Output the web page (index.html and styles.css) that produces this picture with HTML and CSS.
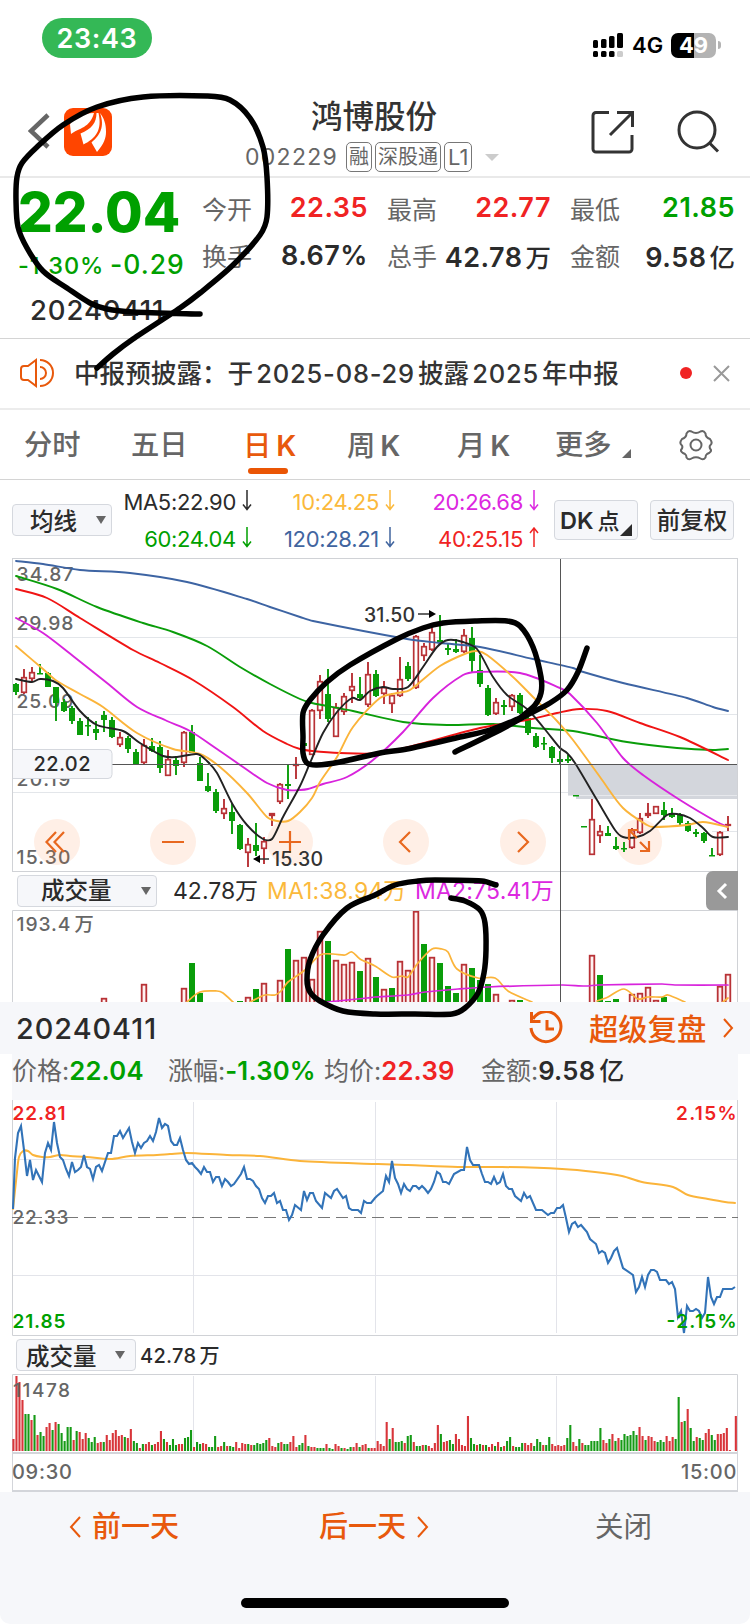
FILE: index.html
```html
<!DOCTYPE html>
<html lang="zh-cn">

<head>
    <meta charset="UTF-8">
    <meta name="viewport" content="width=device-width, initial-scale=1.0">
    <title>鸿博股份</title>
    <link rel="stylesheet" href="styles.css">
</head>

<body>
    <div class="status">
        <div class="time">23:43</div>
        <div class="status-right">
            <svg class="signal" width="30" height="25">
                <rect x="0" y="7" width="5" height="8" rx="1.5" />
                <rect x="8" y="6" width="5.5" height="9" rx="1.5" />
                <rect x="16" y="3" width="5.5" height="12" rx="1.5" />
                <rect x="24" y="0" width="6" height="15" rx="1.5" />
                <rect x="0" y="18" width="5" height="6" rx="1.5" />
                <rect x="8" y="18" width="5.5" height="6" rx="1.5" />
                <rect x="16" y="18" width="5.5" height="6" rx="1.5" />
                <rect x="24" y="18" width="6" height="6" rx="1.5" fill="#ccc" />
            </svg>
            <span class="net">4G</span>
            <div class="battery">49</div>
            <i class="nub"></i>
        </div>
    </div>

    <div class="header">
        <svg class="back" width="22" height="36" viewBox="0 0 22 36">
            <path d="M20 2L3 18l17 16" />
        </svg>
        <svg class="logo" width="48" height="48" viewBox="0 0 48 48">
            <rect width="48" height="48" rx="9" fill="#ff4500" />
            <path d="M30 5C19 5 8 9 6 16.500L7 26c8-6 19-6 23-21zM32.500 5c0 10-5 16-16 20.500l3 11c12-6 19-14 15-31.500zM36 5c5 14 0 22-8.500 29.500l5.500 9.500c7-8 9-14 9-20 0-8-2-14-6-19z" />
        </svg>
        <div class="title">
            <h1>鸿博股份</h1>
            <div class="code">
                <span class="num">002229</span>
                <span class="tag">融</span>
                <span class="tag">深股通</span>
                <span class="tag">L1</span>
                <i class="down"></i>
            </div>
        </div>
        <svg class="share" width="44" height="44" viewBox="0 0 44 44">
            <path d="M18 2.500H5a3 3 0 0 0-3 3V39a3 3 0 0 0 3 3h33a3 3 0 0 0 3-3V25M26 2.500h15.500V17M41 3L19 25" />
        </svg>
        <svg class="search" width="44" height="44" viewBox="0 0 44 44">
            <circle cx="20" cy="20" r="18" />
            <path d="M32.500 33L41 41.500" />
        </svg>
    </div>

    <div class="quote">
        <div class="now">
            <div class="price">22.04</div>
            <div class="change"><span>-1.30%</span><b>-0.29</b></div>
            <div class="date">20240411</div>
        </div>
        <div class="grid">
            <div class="cell"><span>今开</span><b class="up">22.35</b></div>
            <div class="cell"><span>最高</span><b class="up">22.77</b></div>
            <div class="cell"><span>最低</span><b class="fall">21.85</b></div>
            <div class="cell"><span>换手</span><b>8.67%</b></div>
            <div class="cell"><span>总手</span><b>42.78<em>万</em></b></div>
            <div class="cell"><span>金额</span><b>9.58<em>亿</em></b></div>
        </div>
    </div>

    <div class="notice">
        <svg class="horn" width="36" height="30" viewBox="0 0 36 30">
            <path d="M16 2v26L8 22H4a3 3 0 0 1-3-3v-8a3 3 0 0 1 3-3h4zM20 9a6 6 0 0 1 0 12M20 2a13 13 0 0 1 0 26" />
        </svg>
        <p>中报预披露：<span>于</span><span class="n">2025-08-29</span><span>披露</span><span class="n">2025</span><span>年中报</span></p>
        <i class="dot"></i>
        <svg class="close" width="17" height="17" viewBox="0 0 17 17">
            <path d="M1 1l15 15M16 1L1 16" />
        </svg>
    </div>

    <div class="tabs">
        <span>分时</span>
        <span>五日</span>
        <span class="active">日<em>K</em></span>
        <span>周<em>K</em></span>
        <span>月<em>K</em></span>
        <span class="more">更多<i></i></span>
        <svg class="gear" width="34" height="32" viewBox="-17 -16 34 32">
            <path d="M-4.500-13.500Q0-10.500 4.500-13.500Q7.500-15 9.500-11.500Q9.500-7.500 14-6Q17-2 14.500 0Q12.500 2 15 5Q15.500 7 11 9Q9.500 10 9.500 12.500Q7.500 15.500 4.500 13.500Q0 11 -4.500 13.500Q-7.500 15.500-9.500 12.500Q-9.500 10-11 9Q-15.500 7-15 5Q-12.500 2-14.500 0Q-17-2-14-6Q-9.500-7.500-9.500-11.500Q-7.500-15-4.500-13.500z" />
            <circle r="5.500" />
        </svg>
    </div>

    <div class="ma">
        <div class="select s1">均线<i></i></div>
        <div class="ma-list">
            <span class="c1">MA5:22.90<svg class="arr" viewBox="0 0 10 21"><path d="M5 0v19M1 14.500l4 5 4-5" /></svg></span>
            <span class="c2">10:24.25<svg class="arr" viewBox="0 0 10 21"><path d="M5 0v19M1 14.500l4 5 4-5" /></svg></span>
            <span class="c3">20:26.68<svg class="arr" viewBox="0 0 10 21"><path d="M5 0v19M1 14.500l4 5 4-5" /></svg></span>
            <span class="c4">60:24.04<svg class="arr" viewBox="0 0 10 21"><path d="M5 0v19M1 14.500l4 5 4-5" /></svg></span>
            <span class="c5">120:28.21<svg class="arr" viewBox="0 0 10 21"><path d="M5 0v19M1 14.500l4 5 4-5" /></svg></span>
            <span class="c6">40:25.15<svg class="arr" viewBox="0 0 10 21"><path d="M5 20V1M1 6l4-5 4 5" /></svg></span>
        </div>
        <div class="btn dk">DK<em>点</em><i></i></div>
        <div class="btn">前复权</div>
    </div>

    <div class="kline">
        <svg id="candle" width="726" height="314" viewBox="0 0 726 314">
            <g stroke="#e3e6ea" stroke-width="1">
                <path d="M0 79.500h726M0 156.500h726M0 234.500h726M700 273.500h26" />
            </g>
            <path d="M556 206h170v35H564v-4h-8z" fill="#d3d6dc" />
            <path d="M556 237.500h170" stroke="#e6e8ec" />
            <g class="axis">
                <text x="4.500" y="23" textLength="57">34.87</text>
                <text x="4.500" y="72" textLength="57">29.98</text>
                <text x="4.500" y="150" textLength="57">25.09</text>
                <text x="4.500" y="228" textLength="54">20.19</text>
                <text x="4.500" y="306" textLength="54">15.30</text>
            </g>
            <g fill="#ff7a30" fill-opacity=".12">
                <circle cx="45" cy="284" r="23" />
                <circle cx="161" cy="284" r="23" />
                <circle cx="278" cy="284" r="23" />
                <circle cx="394" cy="284" r="23" />
                <circle cx="511" cy="284" r="23" />
                <circle cx="627" cy="284" r="23" />
            </g>
            <g id="sticks"></g>
            <g id="maLines"></g>
            <g fill="none" stroke="#e8681f" stroke-width="2.200">
                <path d="M44 274L34.500 284L44 294M52 274L42.500 284L52 294" />
                <path d="M150 284h22M267 284h22M278 273v22" />
                <path d="M398 274L388 284L398 294M506 274L516 284L506 294" />
                <path d="M617 282v-10h9M617 272l8 8M637 283v10h-9M637 293l-9-9" />
            </g>
            <g class="mark">
                <text x="352" y="64" textLength="51">31.50</text>
                <text x="260" y="308" textLength="51">15.30</text>
                <path d="M406 56h15M257 301h-13" stroke="#333" stroke-width="1.500" />
                <path d="M424 56l-7-4v8zM241 301l7-4v8z" />
            </g>
            <path d="M100 206.500h626" stroke="#555" />
            <g class="tip">
                <rect x="-3" y="191.500" width="103" height="29" rx="4" />
                <text x="21.500" y="213" textLength="57">22.02</text>
            </g>
            <path d="M.5 0v314M725.500 0v314M0 .5h726M0 313.500h726" stroke="#d0d2d6" />
        </svg>
        <div class="vol-head">
            <div class="select s2">成交量<i></i></div>
            <span class="v1">42.78万</span>
            <span class="v2">MA1:38.94万</span>
            <span class="v3">MA2:75.41万</span>
            <div class="fold"><svg width="12" height="18" viewBox="0 0 12 18"><path d="M10 2L3 9l7 7" /></svg></div>
        </div>
        <svg id="volume" width="726" height="92" viewBox="0 0 726 92">
            <g class="axis">
                <text x="4.500" y="21" textLength="54">193.4</text>
                <text x="62.500" y="21" textLength="18">万</text>
            </g>
            <g id="volBars"></g>
            <g id="volLines"></g>
            <path d="M.5 92V.5h725V92" fill="none" stroke="#d0d2d6" />
        </svg>
        <div class="cross"></div>
    </div>

    <div class="day-head">
        <span class="day">20240411</span>
        <svg class="history" width="34" height="34" viewBox="0 0 34 34">
            <path d="M4 8a15 15 0 1 1-2 9M2.500 1v9.500h9M18 9v9h7" />
        </svg>
        <span class="replay">超级复盘</span>
        <svg class="chev" width="12" height="20" viewBox="0 0 12 20"><path d="M2 1l8 9-8 9" /></svg>
    </div>
    <div class="day-info">
        <span>价格:<b class="fall">22.04</b></span>
        <span>涨幅:<b class="fall">-1.30%</b></span>
        <span>均价:<b class="up">22.39</b></span>
        <span>金额:<b>9.58<em>亿</em></b></span>
    </div>

    <svg id="minute" width="726" height="236" viewBox="0 0 726 236">
        <path d="M0 59.500h726M0 175.500h726M181.500 2v231M363.500 2v231M544.500 2v231" stroke="#e3e4ea" />
        <path d="M.5 0v235.500h725V0" fill="none" stroke="#d0d2d6" />
        <path d="M0 117.500h726" stroke="#777" stroke-dasharray="12 6" />
        <g class="small">
            <text x=".5" y="124" textLength="56" fill="#666">22.33</text>
        </g>
        <g id="minuteLines"></g>
        <g class="small">
            <text x=".5" y="20" textLength="53" fill="#f02323">22.81</text>
            <text x=".5" y="228" textLength="53" fill="#00a000">21.85</text>
            <text x="664" y="20" textLength="60.500" fill="#f02323">2.15%</text>
            <text x="654.500" y="228" textLength="70" fill="#00a000">-2.15%</text>
        </g>
    </svg>

    <div class="vol-head2">
        <div class="select s3">成交量<i></i></div>
        <span>42.78<em>万</em></span>
    </div>

    <svg id="minuteVol" width="726" height="78" viewBox="0 0 726 78">
        <path d="M181.500 2v75M363.500 2v75M544.500 2v75" stroke="#e3e4ea" />
        <path d="M.5 78V.5h725V78" fill="none" stroke="#d0d2d6" />
        <g id="minuteBars"></g>
        <g class="small"><text x="1" y="23" textLength="57" fill="#666">11478</text></g>
    </svg>
    <div class="hours"><span>09:30</span><span>15:00</span></div>

    <div class="footer">
        <div class="days">
            <a><svg width="12" height="22" viewBox="0 0 12 22"><path d="M11 1L2 11l9 10" /></svg>前一天</a>
            <a>后一天<svg width="12" height="22" viewBox="0 0 12 22"><path d="M1 1l9 10-9 10" /></svg></a>
            <a class="quit">关闭</a>
        </div>
        <div class="home"></div>
    </div>

    <svg id="pen" width="750" height="1624" viewBox="0 0 750 1624"></svg>

    <script src="chart.js"></script>
</body>

</html>
```
FILE: styles.css
```css
* {
    box-sizing: border-box;
}

body {
    position: relative;
    width: 750px;
    height: 1624px;
    margin: 0;
    overflow: hidden;
    background: #fff;
    color: #2b2b2b;
    font-family: Inter, "Noto Sans CJK SC", sans-serif;
}

svg {
    display: block;
    flex: none;
}

em,
i {
    font-style: normal;
}

h1,
p {
    margin: 0;
}

.up {
    color: #f02323 !important;
}

.fall {
    color: #00a000 !important;
}

/* 状态栏 */
.status {
    display: flex;
    justify-content: space-between;
    height: 90px;
    padding: 18px 29px 0 42px;
}

.time {
    width: 110px;
    height: 40px;
    line-height: 41px;
    border-radius: 20px;
    background: #34b856;
    color: #fff;
    font-size: 27px;
    font-weight: 600;
    text-align: center;
    letter-spacing: .6px;
}

.status-right {
    display: flex;
    align-items: center;
    height: 54px;
}

.net {
    margin: 0 0 0 9px;
    width: 39px;
    color: #000;
    font-size: 22px;
    font-weight: 600;
}

.battery {
    width: 45px;
    height: 25px;
    line-height: 25px;
    border-radius: 7px;
    background: linear-gradient(to right, #000 50%, #b3b3b3 50%);
    color: #fff;
    font-size: 22px;
    font-weight: 700;
    text-align: center;
}

.nub {
    width: 3px;
    height: 8px;
    margin-left: 2px;
    border-radius: 0 3px 3px 0;
    background: #b3b3b3;
}

/* 头部 */
.header {
    display: flex;
    align-items: flex-start;
    height: 88px;
    border-bottom: 2px solid #e9e9e9;
}

.header path,
.header circle {
    fill: none;
    stroke: #333;
    stroke-width: 3;
}

.header .back {
    margin: 23px 0 0 28px;
}

.header .back path {
    stroke: #666;
    stroke-width: 4.5;
}

.header .logo {
    margin: 18px 0 0 14px;
}

.header .logo path {
    fill: #fff;
    stroke: none;
}

.title {
    width: 273px;
    margin-left: 133px;
}

.title h1 {
    width: 258px;
    margin-top: 7px;
    line-height: 40px;
    font-size: 31.5px;
    font-weight: 500;
    text-align: center;
    color: #333;
}

.code {
    display: flex;
    align-items: center;
    height: 30px;
    margin-top: 5px;
    color: #666;
}

.code .num {
    width: 101px;
    font-size: 23px;
    letter-spacing: 1.3px;
}

.tag {
    height: 30px;
    line-height: 28px;
    padding: 0 2px;
    margin-right: 3px;
    border: 1px solid #777;
    border-radius: 5px;
    font-size: 20px;
    white-space: nowrap;
}

.tag:nth-child(4) {
    padding: 0 3px;
    font-size: 22px;
}

.down {
    margin-left: 10px;
    border: 7px solid transparent;
    border-top-color: #ccc;
    border-bottom: 0;
}

.share {
    margin: 20px 0 0 73px;
}

.search {
    margin: 20px 0 0 42px;
}

/* 行情 */
.quote {
    display: flex;
    height: 161px;
    border-bottom: 1px solid #d4d4d4;
}

.now {
    width: 202px;
    padding-left: 18px;
    color: #00a000;
}

.price {
    height: 66px;
    line-height: 68px;
    font-size: 54.5px;
    font-weight: 800;
}

.change {
    display: flex;
    align-items: baseline;
    height: 40px;
    line-height: 40px;
    white-space: nowrap;
}

.change span {
    width: 92px;
    font-size: 23.5px;
    font-weight: 500;
    letter-spacing: 1px;
}

.change b {
    font-size: 26.5px;
    font-weight: 500;
    letter-spacing: 1px;
}

.date {
    padding: 6px 0 0 12px;
    line-height: 40px;
    font-size: 27.5px;
    font-weight: 500;
    letter-spacing: .9px;
    color: #2b2b2b;
}

.grid {
    display: grid;
    grid-template-columns: 166px 164px 165px;
    grid-template-rows: 47px 48px;
    column-gap: 19px;
    padding-top: 6px;
}

.cell {
    display: flex;
    justify-content: space-between;
    align-items: center;
    white-space: nowrap;
}

.cell span {
    font-size: 25px;
    color: #666;
}

.cell b {
    font-size: 27px;
    font-weight: 600;
    letter-spacing: .5px;
}

.cell em {
    margin-left: 3px;
    font-size: 25.5px;
    font-weight: 500;
    letter-spacing: 0;
}

/* 公告 */
.notice {
    display: flex;
    align-items: center;
    height: 71px;
    padding: 0 20px 3px 20px;
    border-bottom: 2px solid #ececec;
}

.horn {
    margin-top: 2px;
}

.horn path {
    fill: none;
    stroke: #e8590c;
    stroke-width: 2;
}

.notice p {
    width: 624px;
    padding-left: 18px;
    margin-top: -1px;
    white-space: nowrap;
    font-size: 25.6px;
    font-weight: 500;
    color: #333;
}

.notice p span {
    margin-right: 3px;
}

.notice .n {
    font-size: 25.5px;
    letter-spacing: .8px;
}

.dot {
    width: 12px;
    height: 12px;
    margin-top: 2px;
    border-radius: 50%;
    background: #f02323;
}

.close {
    margin-top: 2px;
    margin-left: 21px;
}

.close path {
    stroke: #999;
    stroke-width: 2;
}

/* 周期 */
.tabs {
    display: grid;
    grid-template-columns: 107px 112px 104px 110px 98px 124px 34px;
    align-items: center;
    height: 70px;
    padding-left: 24px;
    border-bottom: 1px solid #d4d4d4;
}

.tabs span {
    position: relative;
    height: 69px;
    line-height: 71px;
    font-size: 28.3px;
    font-weight: 500;
    color: #666;
    white-space: nowrap;
}

.tabs em {
    margin-left: 5px;
    font-size: 28.5px;
    font-weight: 600;
}

.tabs .active {
    color: #e8590c;
}

.tabs .active::after {
    content: "";
    position: absolute;
    left: 5px;
    bottom: 5px;
    width: 40px;
    height: 6px;
    border-radius: 3px;
    background: #ea5504;
}

.more i {
    display: inline-block;
    margin-left: 10px;
    border-left: 9px solid transparent;
    border-bottom: 9px solid #666;
    vertical-align: -3px;
}

.gear path,
.gear circle {
    fill: none;
    stroke: #666;
    stroke-width: 2;
}

/* 均线 */
.ma {
    display: flex;
    align-items: center;
    height: 78px;
    padding: 2px 0 0 12px;
}

.select {
    display: flex;
    align-items: center;
    flex: none;
    height: 32px;
    border: 1px solid #d5d8de;
    border-radius: 4px;
    background: #f6f7fa;
    font-size: 23.5px;
    font-weight: 500;
}

.select i {
    border: 5px solid transparent;
    border-top: 8px solid #666;
    border-bottom: 0;
}

.s1 {
    width: 100px;
    padding-left: 17px;
}

.s1 i {
    margin-left: 19px;
}

.ma-list {
    display: grid;
    grid-template-columns: 140px 143px 144px;
    grid-template-rows: 37px 37px;
    width: 442px;
}

.ma-list span {
    display: flex;
    justify-content: flex-end;
    align-items: center;
    font-size: 22px;
    letter-spacing: -.3px;
}

.arr {
    width: 10px;
    height: 21px;
    margin-left: 6px;
    margin-top: -2px;
}

.arr path {
    fill: none;
    stroke: currentColor;
    stroke-width: 1.5;
}

.c1 {
    color: #2b2b2b;
}

.c2 {
    color: #fbb93c;
}

.c3 {
    color: #dc28e0;
}

.c4 {
    color: #00a000;
}

.c5 {
    color: #41659f;
}

.c6 {
    color: #f02323;
}

.btn {
    position: relative;
    flex: none;
    width: 84px;
    height: 40px;
    line-height: 39px;
    margin-right: 12px;
    border: 1px solid #d5d8de;
    border-radius: 4px;
    background: #f6f7fa;
    font-size: 23.5px;
    font-weight: 500;
    text-align: center;
    white-space: nowrap;
}

.dk {
    padding-left: 5px;
    text-align: left;
    font-weight: 600;
}

.dk em {
    margin-left: 4px;
    font-size: 22px;
    font-weight: 500;
}

.dk i {
    position: absolute;
    right: 5px;
    bottom: 3px;
    border-left: 12px solid transparent;
    border-bottom: 12px solid #2b2b2b;
}

/* K线 */
.kline {
    position: relative;
    width: 726px;
    margin-left: 12px;
}

text {
    font-family: Inter, "Noto Sans CJK SC", sans-serif;
}

.axis text {
    font-size: 19.3px;
    font-weight: 500;
    fill: #666;
}

.mark text {
    font-size: 19.5px;
    font-weight: 500;
    fill: #333;
}

.tip rect {
    fill: #f6f7fa;
    stroke: #d5d8de;
}

.tip text {
    font-size: 20px;
    font-weight: 500;
    fill: #2b2b2b;
}

.vol-head {
    display: flex;
    align-items: center;
    height: 38px;
    padding: 0 0 1px 5px;
    font-size: 23px;
    line-height: 32px;
    white-space: nowrap;
}

.s2 {
    width: 140px;
    padding-left: 23px;
}

.s2 i {
    margin-left: 29px;
}

.v1 {
    width: 94px;
    margin-left: 16px;
}

.v2 {
    width: 148px;
    color: #fbb93c;
    letter-spacing: .1px;
}

.v3 {
    color: #dc28e0;
    letter-spacing: .2px;
}

.fold {
    width: 32px;
    height: 40px;
    margin-left: auto;
    margin-top: 1px;
    padding: 11px 0 0 10px;
    border-radius: 7px 0 0 7px;
    background: #999;
}

.fold path {
    fill: none;
    stroke: #fff;
    stroke-width: 3;
}

.cross {
    position: absolute;
    left: 548px;
    top: 1px;
    width: 1px;
    height: 443px;
    background: #555;
}

/* 当日分时 */
.day-head {
    display: flex;
    align-items: center;
    height: 52px;
    padding-left: 16px;
    background: #f6f7fa;
}

.day {
    width: 513px;
    font-size: 28.8px;
    font-weight: 500;
    letter-spacing: 1px;
}

.history path {
    fill: none;
    stroke: #e8590c;
    stroke-width: 3;
}

.replay {
    width: 133px;
    margin-left: 26px;
    padding-bottom: 2px;
    font-size: 29.3px;
    font-weight: 500;
    color: #e8590c;
}

.chev path,
.footer path {
    fill: none;
    stroke: #e8590c;
    stroke-width: 2;
}

.day-info {
    display: grid;
    grid-template-columns: 156px 156px 157px 160px;
    width: 726px;
    height: 46px;
    line-height: 34px;
    margin-left: 12px;
    background: #f6f7fa;
    font-size: 25px;
    color: #666;
    white-space: nowrap;
}

.day-info b {
    font-size: 25.7px;
    font-weight: 600;
    color: #2b2b2b;
    letter-spacing: .2px;
}

.day-info em {
    margin-left: 4px;
    font-size: 25px;
    font-weight: 500;
}

#minute,
#minuteVol {
    margin-left: 12px;
}

.small text {
    font-size: 19px;
    font-weight: 600;
}

.small text[fill="#666"] {
    font-weight: 500;
}

.vol-head2 {
    display: flex;
    align-items: center;
    height: 38px;
    padding: 0 0 1px 16px;
    font-size: 20px;
    font-weight: 500;
    letter-spacing: .3px;
}

.vol-head2 em {
    margin-left: 3px;
}

.s3 {
    width: 120px;
    margin-right: 4px;
    padding-left: 9px;
    letter-spacing: 0;
}

.s3 i {
    margin-left: 18px;
}

.hours {
    display: flex;
    justify-content: space-between;
    align-items: center;
    width: 726px;
    height: 40px;
    margin-left: 12px;
    border: 2px solid #d3d5da;
    border-width: 2px 1px;
    font-size: 20px;
    font-weight: 500;
    letter-spacing: .7px;
    color: #666;
}

.hours span:first-child {
    margin-left: -1px;
}

.footer {
    height: 132px;
    border-radius: 0 0 10px 10px;
    background: #f6f7fa;
}

.days {
    display: grid;
    grid-template-columns: 250px 276px 154px;
    align-items: center;
    height: 106px;
    padding: 0 0 37px 69px;
    line-height: 40px;
    font-size: 29px;
    font-weight: 500;
    color: #e8590c;
}

.days a {
    display: flex;
    align-items: center;
    gap: 11px;
}

.days .quit {
    color: #666;
    font-size: 28.5px;
    font-weight: 400;
}

.home {
    width: 268px;
    height: 10px;
    margin-left: 241px;
    border-radius: 5px;
    background: #000;
}

/* 手写标注 */
#pen {
    position: absolute;
    left: 0;
    top: 0;
    pointer-events: none;
}
```
FILE: chart.js
```js
var RED = "#b83236";
var GREEN = "#0a9d0a";

// 颜色 最高 实体上 实体下 最低
var candles = [
    "G 125 126 134 137", "R 111 119 135 136", "R 109 114 121 124", "G 106 115 116 116", "G 114 115 129 129",
    "G 129 129 145 163", "G 141 144 153 154", "G 148 150 163 166", "G 160 163 177 177", "G 159 167 168 178",
    "G 163 171 175 182", "G 153 157 162 174", "G 159 162 179 180", "R 174 179 187 189", "G 178 180 191 195",
    "G 191 194 207 207", "R 181 187 205 206", "G 180 188 193 194", "G 183 189 210 215", "R 192 201 218 218",
    "G 198 202 208 217", "R 173 174 205 209", "G 167 174 195 195", "G 199 205 223 223", "G 215 228 233 234",
    "G 231 234 253 255", "R 241 250 256 261", "G 245 254 263 276", "G 266 267 291 292", "R 280 286 295 309",
    "G 265 287 293 298", "R 279 283 291 306", "R 255 255 258 268", "R 225 226 244 246", "G 207 226 228 241",
    "R 199 206 208 221", "G 184 185 188 188", "R 151 152 197 197", "R 117 123 153 161", "G 111 136 161 164",
    "R 145 149 179 179", "R 135 138 154 157", "R 115 128 133 145", "G 119 136 140 142", "R 104 116 147 149",
    "G 112 116 138 139", "R 123 129 136 146", "R 135 137 146 155", "R 99 121 138 139", "G 104 108 121 123",
    "R 77 78 130 131", "R 85 88 98 103", "R 70 74 92 93", "G 57 82 84 85", "G 85 90 92 97",
    "G 81 91 94 95", "R 71 77 94 95", "G 69 80 103 115", "G 97 112 126 129", "G 127 130 157 158",
    "R 140 144 156 157", "G 142 147 149 157", "R 136 137 149 153", "G 135 137 155 156", "G 159 160 175 177",
    "G 175 178 189 190", "G 179 185 186 192", "G 188 189 200 205", "G 193 201 204 207", "G 197 201 203 205",
    "G 237 237 238 238", "G 268 268 269 269", "R 241 261 297 297", "R 267 273 278 285", "G 268 275 278 278",
    "G 279 288 291 292", "G 284 290 291 294", "R 270 272 290 291", "R 255 260 275 276", "R 245 255 258 260",
    "R 248 248 256 256", "G 244 252 257 262", "G 250 255 259 260", "G 255 257 265 267", "G 263 265 273 274",
    "G 271 274 276 279", "G 274 275 283 285", "G 290 297 298 298", "R 273 274 297 298", "R 258 266 268 273"
];

var ma = [
    ["#3d64a3", "4,3 31,6 68,12 118,15 175,24 235,41 258,49 288,59 301,63 395,81 428,85 468,89 521,101 561,110 568,113 611,125 675,140 701,149 716,153"],
    ["#0a9d0a", "4,18 45,31 85,49 131,65 161,74 195,88 228,109 258,126 288,141 300,145 341,153 391,164 435,167 481,166 521,170 561,173 615,184 665,190 701,192 716,191"],
    ["#f01414", "4,31 35,40 68,60 121,92 148,105 181,122 221,149 251,173 275,186 288,191 300,193 328,195 368,195 408,186 468,170 515,162 545,155 568,151 595,153 628,165 668,179 716,202"],
    ["#d823dc", "4,60 31,75 61,98 95,125 125,149 155,163 178,173 205,191 231,209 255,225 275,232 288,232 296,231 311,226 335,219 361,202 391,174 421,140 451,117 465,114 508,115 548,130 558,136 585,165 611,200 631,217 668,242 705,264 716,269"],
    ["#fbb43a", "4,88 31,111 45,123 68,136 91,149 125,175 161,191 188,196 208,209 235,235 255,259 265,263 276,263 288,254 300,240 308,224 325,199 341,169 368,140 385,135 398,132 428,108 455,95 465,93 475,97 501,119 521,139 545,163 561,182 588,219 611,250 635,267 641,269 675,267 691,264 716,269"],
    ["#222", "4,121 20,124 28,121 41,123 51,130 68,153 85,167 111,173 128,185 151,198 165,199 185,196 195,203 205,215 221,247 235,267 251,281 260,281 271,259 288,228 298,205 311,175 325,154 340,140 348,142 358,133 371,129 381,131 396,129 411,109 425,89 436,82 451,84 465,91 481,119 495,137 515,151 531,169 548,190 555,195 563,205 585,242 603,272 611,279 625,279 638,273 655,257 665,256 678,260 691,270 701,279 716,279"]
];

// 第几根 颜色 顶部y
var volume = "11R88 16R74 21R78 22G53 23G83 28G91 29R87 30G79 31R73 33R70 34G39 35R50 36R47 37R69 38R21 39G31 40R50 41R54 42R52 43G61 44R48 45G67 46R79 47G78 48R51 49R60 50R1 51G34 52R47 53G53 54G76 55G83 56R54 57G58 58G70 59G74 60R84 62R90 63G90 72R45 73G65 74G91 75G89 77R84 78R83 79R77 80R90 81G87 88R76 89R64";

var volMa = [
    ["#fbb43a", "175,92 188,82 205,81 211,83 221,92"],
    ["#fbb43a", "238,92 253,85 263,85 270,80 276,72 293,60 308,45 321,44 333,45 340,42 348,49 363,56 380,67 390,66 396,67 406,53 420,39 430,39 436,42 445,59 466,68 483,68 496,81 520,92"],
    ["#fbb43a", "585,91 596,87 612,79 626,89 636,87 650,87 656,85 673,92"],
    ["#fbb43a", "711,92 716,88"],
    ["#d823dc", "315,92 355,88 363,87 396,85 413,82 446,79 476,77 550,75 573,76 586,75 650,74 663,75 716,75"]
];

var average = "1,109 5,72 7,57 11,51 16,51 21,55 30,57 38,57 48,55 58,56 75,57 98,59 118,56 145,55 158,54 175,53 215,55 248,56 288,61 363,64 396,65 446,67 490,67 550,69 583,72 610,76 630,82 661,87 676,95 696,99 713,102 723,103";

var price = "1,109 3,58 6,33 9,26 12,50 15,76 18,60 21,80 24,70 27,76 30,82 33,53 36,43 39,50 42,22 45,43 48,57 51,60 54,69 57,76 60,62 63,72 66,70 69,67 72,55 75,67 78,69 81,79 84,67 87,65 90,71 96,53 99,53 102,36 105,36 108,31 111,38 117,28 120,42 123,53 126,43 129,48 132,43 135,41 138,36 141,41 144,32 147,18 150,28 153,24 156,26 159,41 162,45 165,45 168,38 171,50 174,60 177,64 180,63 183,67 186,70 189,74 192,67 195,72 198,72 201,82 204,77 207,77 210,86 213,79 216,82 219,86 222,84 229,74 232,67 235,79 238,79 241,81 244,86 247,89 250,98 253,103 256,96 259,96 262,93 265,103 268,101 271,110 274,110 277,120 280,115 283,105 289,110 292,91 295,100 298,93 301,93 304,101 310,108 313,93 319,98 322,91 325,89 331,98 334,96 337,108 340,110 346,110 349,113 352,101 355,103 359,103 363,98 365,96 371,91 374,76 377,82 380,61 383,78 386,84 389,93 392,84 395,89 398,91 401,86 404,86 407,89 410,86 413,89 416,93 419,89 422,82 425,72 428,74 431,82 434,82 437,84 442,74 449,70 452,70 455,47 458,60 461,65 467,65 470,74 473,82 476,82 479,84 482,77 485,84 488,82 491,74 494,86 497,89 500,89 503,96 509,101 512,93 515,98 518,96 524,110 530,110 536,115 539,113 542,113 545,108 548,108 551,105 554,118 557,132 560,124 563,122 566,127 569,125 575,132 578,139 584,144 587,153 590,151 593,153 596,163 599,158 602,151 605,148 611,168 621,175 624,192 627,187 630,177 633,187 636,175 639,170 642,170 645,172 648,180 654,180 657,184 660,182 663,189 666,217 669,211 672,233 675,206 678,211 681,211 684,209 687,211 690,218 693,213 696,177 699,197 702,204 705,197 708,197 711,189 720,189 723,187";

// 每分钟成交量
var minuteVol = "R12 R75 R69 R51 G37 G37 R31 G36 R16 G19 G15 R24 R28 G21 R29 G27 G18 G10 G24 G24 R11 G20 R19 R12 R18 G13 G9 G14 R8 R9 " +
    "G9 R16 R11 R18 R21 R15 R16 G14 R13 R22 G10 G8 R3 G7 R7 R9 G6 R7 R9 R20 G12 R9 G6 G12 G6 R7 R7 G13 G14 G21 " +
    "R4 G9 G7 R8 R7 G4 G4 G15 R4 R5 G9 R5 G5 G4 R9 R3 R8 R7 G7 R6 G6 G8 G7 G8 G11 R13 R5 R4 G8 R9 " +
    "G7 G7 R9 R15 R4 G6 G8 R16 G5 R4 R4 G3 G3 G3 R7 G3 G2 R7 R5 G3 R3 G2 G4 R4 R8 G4 R6 R7 G3 R3 " +
    "R3 R10 R7 R5 R29 G12 R23 G9 G9 G10 R8 G15 G16 R9 G5 G5 R6 G6 R5 R3 R8 R26 G17 R9 R10 G11 G7 R17 R12 R6 " +
    "R5 R35 G13 G7 R6 G7 R6 G6 R4 R7 G5 R9 G4 R5 G10 G14 R5 G4 G4 G8 R8 R6 R8 G5 G12 G9 R6 G6 G14 R7 " +
    "R5 R6 R5 R6 G13 G26 R9 R5 G12 R8 G6 G6 G10 G10 G10 G23 R11 R8 G12 R17 G10 R13 G11 G17 G15 G16 G20 G16 R24 R15 " +
    "G11 R15 R14 R10 G9 G11 G9 R15 R10 R14 G12 G54 R29 G30 R42 G23 G10 R14 G13 G11 R18 R22 G16 G11 R17 R17 R18 R23 R1 R0 R35";

// 手写笔迹
var strokes = [
    "200,314 133,312 107,309 90,303 67,288 43,271 27,248 18,227 16,200 17,177 22,163 37,147 63,125 97,107 143,97 207,96 230,100 250,118 263,147 267,177 267,217 260,235 233,265 200,293 180,308 133,339 113,354 97,368",
    "587,648 578,672 567,690 550,703 527,715 500,730 455,752",
    "520,718 490,730 460,737 407,749 380,753 340,762 317,765 307,763 303,753 303,737 303,713 310,700 327,682 350,665 397,639 423,628 443,623 475,621 507,621 520,626 533,647 541,677 541,693 535,705 520,718",
    "496,885 482,881 435,880 418,881 395,885 375,895 347,908 323,935 310,960 307,980 310,992 320,1001 343,1011 375,1014 415,1014 452,1014 465,1008 478,993 484,973 486,950 485,923 480,910 465,901 451,898"
];

function $(id) {
    return document.getElementById(id);
}

function add(parent, tag, attrs) {
    var el = document.createElementNS("http://www.w3.org/2000/svg", tag);
    for (var k in attrs) {
        el.setAttribute(k, attrs[k]);
    }
    parent.appendChild(el);
}

// 折线转平滑曲线
function smooth(str) {
    var p = str.split(" ").map(function (s) {
        return s.split(",").map(Number);
    });
    var d = "M" + p[0];
    for (var i = 0; i < p.length - 1; i++) {
        var a = p[i - 1] || p[i], b = p[i], c = p[i + 1], e = p[i + 2] || c;
        // 控制柄不超过本段长度的三分之一
        var len = Math.hypot(c[0] - b[0], c[1] - b[1]) / 3;
        var k1 = Math.min(1 / 6, len / (Math.hypot(c[0] - a[0], c[1] - a[1]) || 1));
        var k2 = Math.min(1 / 6, len / (Math.hypot(e[0] - b[0], e[1] - b[1]) || 1));
        d += "C" + [b[0] + (c[0] - a[0]) * k1, b[1] + (c[1] - a[1]) * k1,
            c[0] - (e[0] - b[0]) * k2, c[1] - (e[1] - b[1]) * k2, c[0], c[1]].join(" ");
    }
    return d;
}

function curve(parent, color, str, width) {
    add(parent, "path", {
        d: smooth(str), fill: "none", stroke: color, "stroke-width": width,
        "stroke-linecap": "round", "stroke-linejoin": "round"
    });
}

candles.forEach(function (s, i) {
    var v = s.split(" ");
    var x = 4 + i * 8;
    var top = +v[2], bottom = +v[3];
    var color = v[0] == "R" ? RED : GREEN;
    add($("sticks"), "path", { d: "M" + x + " " + v[1] + "V" + top + "M" + x + " " + bottom + "V" + v[4], stroke: color, "stroke-width": 1.9 });
    if (v[0] == "R") {
        add($("sticks"), "rect", { x: x - 2.3, y: top + .7, width: 4.6, height: Math.max(bottom - top - 1.4, .6), fill: "#fff", "fill-opacity": .7, stroke: color, "stroke-width": 1.7 });
    } else {
        add($("sticks"), "rect", { x: x - 3, y: top, width: 6, height: Math.max(bottom - top, 1.5), fill: color });
    }
});

ma.forEach(function (m) {
    curve($("maLines"), m[0], m[1], 1.9);
});

volume.split(" ").forEach(function (s) {
    var v = s.match(/(\d+)([RG])(\d+)/);
    var x = 4 + v[1] * 8, y = +v[3];
    if (v[2] == "R") {
        add($("volBars"), "rect", { x: x - 2.3, y: y + .7, width: 4.6, height: 100, fill: "#fff1f1", stroke: RED, "stroke-width": 1.8 });
    } else {
        add($("volBars"), "rect", { x: x - 3, y: y, width: 6, height: 100, fill: GREEN });
    }
});

volMa.forEach(function (m) {
    curve($("volLines"), m[0], m[1], 1.7);
});

curve($("minuteLines"), "#fbb43a", average, 2);
add($("minuteLines"), "polyline", { points: price, fill: "none", stroke: "#3273b8", "stroke-width": 2.1 });

minuteVol.split(" ").forEach(function (s, i) {
    var h = +s.slice(1);
    add($("minuteBars"), "rect", { x: .4 + i * 3.01, y: 77 - h, width: 2.1, height: h, fill: s[0] == "R" ? "#d8353a" : "#169a16" });
});

strokes.forEach(function (s) {
    curve($("pen"), "#000", s, 5.5);
});
```
